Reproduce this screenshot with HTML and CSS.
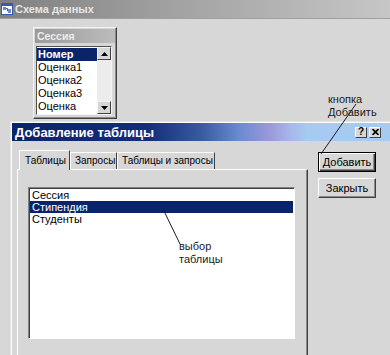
FILE: index.html
```html
<!DOCTYPE html>
<html lang="ru">
<head>
    <meta charset="UTF-8">
    <meta name="viewport" content="width=device-width, initial-scale=1.0">
    <title>Схема данных</title>
    <link rel="stylesheet" href="styles.css">
</head>
<body>
    <div class="schema">
        <div class="schema-title">
            <svg class="schema-icon" width="12" height="12" viewBox="0 0 12 12">
                <rect x="0.5" y="0.5" width="11" height="11" fill="#fff" stroke="#3a5aa8"/>
                <rect x="1" y="1" width="10" height="2" fill="#3a5aa8"/>
                <rect x="2" y="4" width="3" height="3" fill="#6a8ad0"/>
                <rect x="7" y="6" width="3" height="4" fill="#6a8ad0"/>
                <path d="M5 5.5 H6.5 V8 H7" stroke="#3a5aa8" fill="none"/>
            </svg>
            <span>Схема данных</span>
        </div>

        <div class="schema-client">
            <div class="fieldlist">
                <div class="fieldlist-title">Сессия</div>
                <div class="fieldlist-box">
                    <ul class="fields">
                        <li class="selected">Номер</li>
                        <li>Оценка1</li>
                        <li>Оценка2</li>
                        <li>Оценка3</li>
                        <li>Оценка</li>
                    </ul>
                    <div class="vscroll">
                        <div class="sbtn">
                            <svg width="7" height="4" viewBox="0 0 7 4"><path d="M3.5 0 L7 4 H0 Z" fill="#000"/></svg>
                        </div>
                        <div class="strack"></div>
                        <div class="sbtn">
                            <svg width="7" height="4" viewBox="0 0 7 4"><path d="M0 0 H7 L3.5 4 Z" fill="#000"/></svg>
                        </div>
                    </div>
                </div>
            </div>

            <div class="dialog">
                <div class="dialog-title">
                    <span>Добавление таблицы</span>
                    <div class="title-btns">
                        <span class="tbtn">?</span>
                        <span class="tbtn">
                            <svg width="7" height="6" viewBox="0 0 7 6"><path d="M0.5 0 L6.5 6 M6.5 0 L0.5 6" stroke="#000" stroke-width="1.6"/></svg>
                        </span>
                    </div>
                </div>
                <div class="dialog-body">
                    <div class="tabs-area">
                        <div class="tabs">
                            <div class="tab tab-active">Таблицы</div>
                            <div class="tab tab-q">Запросы</div>
                            <div class="tab tab-both">Таблицы и запросы</div>
                        </div>
                        <div class="tab-panel">
                            <ul class="tables">
                                <li>Сессия</li>
                                <li class="selected">Стипендия</li>
                                <li>Студенты</li>
                            </ul>
                        </div>
                    </div>
                    <div class="actions">
                        <button class="btn btn-default">Добавить</button>
                        <button class="btn">Закрыть</button>
                    </div>
                </div>
            </div>
        </div>
    </div>

    <!-- подписи-пояснения поверх окон -->
    <svg class="notes" width="390" height="355" viewBox="0 0 390 355">
        <line x1="356" y1="104" x2="321" y2="154" stroke="#1a1a2a" stroke-width="1"/>
        <line x1="163" y1="209" x2="180" y2="244" stroke="#1a1a2a" stroke-width="1"/>
    </svg>
    <div class="note note-add">кнопка<br>Добавить</div>
    <div class="note note-pick">выбор<br>таблицы</div>
</body>
</html>
```

FILE: styles.css
```css
body {
    margin: 0;
    width: 390px;
    height: 355px;
    overflow: hidden;
    position: relative;
    background-color: #d7d7d7;
    font-family: 'Liberation Sans', Arial, sans-serif;
    font-size: 11px;
    color: #000;
}

ul {
    list-style: none;
    margin: 0;
    padding: 0;
}

/* Окно "Схема данных" (неактивное) */
.schema-title {
    height: 18px;
    display: flex;
    align-items: center;
    gap: 2px;
    padding-left: 1px;
    background: linear-gradient(to right, #808080 0%, #a2a2a2 45%, #c6c6c6 100%);
    border-bottom: 1px solid #a0a0a0;
    color: #e6e6e6;
    font-weight: bold;
}

.schema-icon {
    flex-shrink: 0;
}

.schema-client {
    padding-top: 8px;
}

/* Список полей таблицы "Сессия" */
.fieldlist {
    box-sizing: border-box;
    margin-left: 33px;
    width: 84px;
    height: 92px;
    padding: 1px;
    border: 1px solid;
    border-color: #f2f2f2 #404040 #404040 #f2f2f2;
    box-shadow: inset -1px -1px #8a8a8a;
}

.fieldlist-title {
    height: 14px;
    line-height: 14px;
    padding-left: 2px;
    background: linear-gradient(to right, #9a9a9a, #bcbcbc);
    color: #ececec;
    font-weight: bold;
    font-size: 10.5px;
}

.fieldlist-box {
    display: flex;
    margin: 3px 0 0 1px;
    width: 76px;
    height: 69px;
    box-sizing: border-box;
    border: 1px solid;
    border-color: #505050 #f4f4f4 #f4f4f4 #505050;
    background-color: #fff;
}

.fields {
    flex: 1;
    padding-top: 1px;
}

.fields li {
    height: 13px;
    line-height: 13px;
    padding-left: 1px;
    white-space: nowrap;
}

.fields li.selected {
    background-color: #0a246a;
    color: #fff;
    font-weight: bold;
}

.vscroll {
    width: 14px;
    display: flex;
    flex-direction: column;
}

.sbtn {
    height: 13px;
    box-sizing: border-box;
    display: flex;
    align-items: center;
    justify-content: center;
    background-color: #d7d7d7;
    border: 1px solid;
    border-color: #f4f4f4 #404040 #404040 #f4f4f4;
}

.strack {
    flex: 1;
    background-color: #ececec;
}

/* Диалог "Добавление таблицы" */
.dialog {
    margin: 2px 0 0 10px;
    width: 382px;
    height: 240px;
    box-sizing: border-box;
    padding: 1px;
    border: 1px solid;
    border-color: #e4e4e4 #404040 #404040 #e4e4e4;
    box-shadow: inset 1px 1px #fff;
    background-color: #d7d7d7;
}

.dialog-title {
    height: 18px;
    display: flex;
    align-items: center;
    justify-content: space-between;
    padding: 0 9px 0 3px;
    background: linear-gradient(to right, #0a246a 0%, #122e78 36%, #3a5aa0 50%, #6a8ad0 60%, #9a98d8 68%, #a8b8ec 74%, #a6caf0 78%, #a6caf0 100%);
    color: #fff;
    font-weight: bold;
    font-size: 13px;
}

.title-btns {
    display: flex;
    gap: 2px;
}

.tbtn {
    width: 12px;
    height: 11px;
    box-sizing: border-box;
    display: flex;
    align-items: center;
    justify-content: center;
    background-color: #d7d7d7;
    border: 1px solid;
    border-color: #fff #404040 #404040 #fff;
    color: #000;
    font-size: 10px;
    line-height: 1;
}

.dialog-body {
    display: flex;
    gap: 10px;
    padding: 9px 0 0 5px;
}

.tabs {
    display: flex;
    align-items: flex-end;
    padding-left: 2px;
    height: 19px;
}

.tab {
    height: 17px;
    box-sizing: border-box;
    padding-left: 4px;
    line-height: 15px;
    font-size: 10px;
    border: 1px solid;
    border-bottom: none;
    border-color: #fff #404040 #fff #fff;
    white-space: nowrap;
}

.tab-active {
    position: relative;
    z-index: 1;
    height: 20px;
    margin-bottom: -1px;
    width: 51px;
    padding-left: 5px;
    line-height: 20px;
    background-color: #d7d7d7;
}

.tab-q {
    width: 47px;
}

.tab-both {
    width: 98px;
}

.tab-panel {
    width: 291px;
    height: 200px;
    box-sizing: border-box;
    padding: 17px 0 0 10px;
    border: 1px solid;
    border-color: #fff #404040 #404040 #fff;
    box-shadow: inset -1px 0 #8a8a8a;
}

.tables {
    width: 267px;
    height: 152px;
    box-sizing: border-box;
    border: 1px solid;
    border-color: #808080 #fff #fff #808080;
    box-shadow: inset 1px 1px #404040;
    padding: 1px 1px 0 1px;
    background-color: #fff;
}

.tables li {
    height: 12px;
    line-height: 12px;
    padding-left: 2px;
}

.tables li.selected {
    background-color: #0a246a;
    color: #fff;
}

.actions {
    display: flex;
    flex-direction: column;
    gap: 6px;
    padding-top: 2px;
}

.btn {
    width: 58px;
    height: 20px;
    padding: 0;
    font-family: inherit;
    font-size: 11px;
    color: #000;
    background-color: #d7d7d7;
    border: 1px solid;
    border-color: #fff #404040 #404040 #fff;
    box-shadow: inset -1px -1px #8a8a8a;
}

.btn-default {
    border-color: #000;
    box-shadow: inset 1px 1px #fff, inset -1px -1px #404040, inset -2px -2px #8a8a8a;
}

/* Пояснения */
.notes {
    position: absolute;
    left: 0;
    top: 0;
    pointer-events: none;
}

.note {
    position: absolute;
    line-height: 13px;
    color: #1a1a1a;
}

.note-add {
    left: 328px;
    top: 93px;
}

.note-pick {
    left: 179px;
    top: 240px;
}
```
